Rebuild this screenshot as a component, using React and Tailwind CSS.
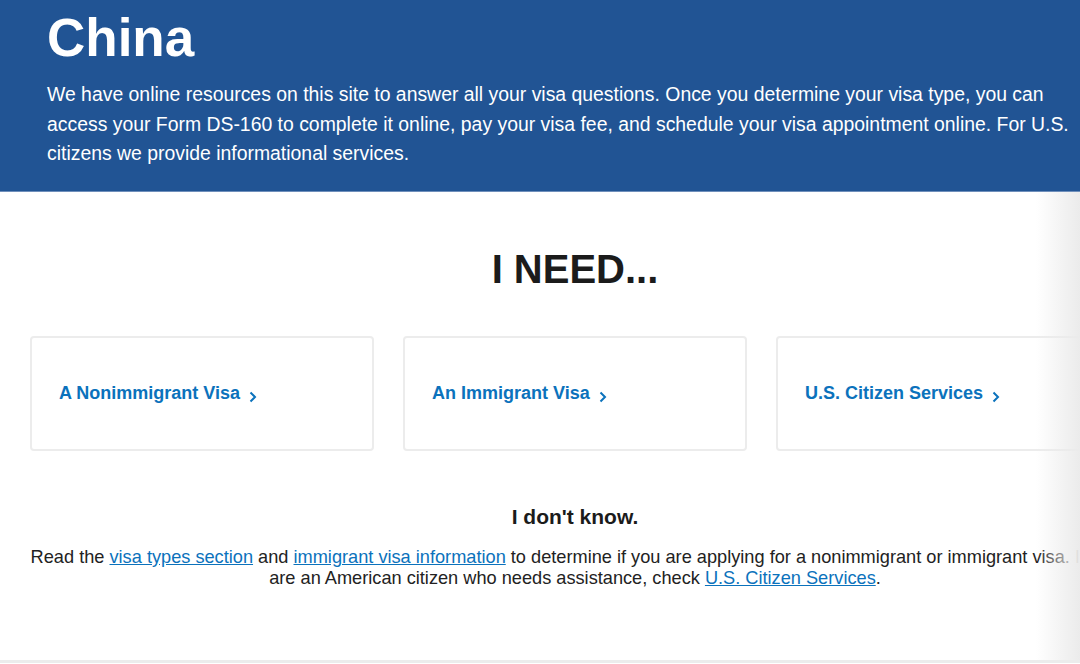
import React from 'react';

const CARDS = ['A Nonimmigrant Visa', 'An Immigrant Visa', 'U.S. Citizen Services'];

function Chevron() {
  return (
    <svg width="8" height="12" viewBox="0 0 8 12" className="shrink-0 mt-[6px]">
      <path d="M1.5 1.5 L6 6 L1.5 10.5" fill="none" stroke="#0b72bc" strokeWidth="2" />
    </svg>
  );
}

export default function App() {
  return (
    <div className="w-full overflow-hidden bg-white text-[#222] font-['Liberation_Sans',Arial,sans-serif]">
      {/* Banner */}
      <header className="bg-[#215494] border-b border-[#6f8fbb] h-[192px] pl-[47px] pt-[8px]">
        <h1 className="text-white font-bold text-[53px] leading-[60px]">China</h1>
        <p className="mt-[12px] w-[1032px] text-white text-[19.4px] leading-[29.5px]">
          We have online resources on this site to answer all your visa questions. Once you determine your visa type, you can access your Form DS-160 to complete it online, pay your visa fee, and schedule your visa appointment online. For U.S. citizens we provide informational services.
        </p>
      </header>

      <div className="relative">
        <main className="w-[1150px] px-[30px] pt-[53px] pb-[71px]">
          <h2 className="text-center font-bold text-[40px] leading-[48px] text-[#1b1b1b]">I NEED...</h2>

          <div className="mt-[43px] grid grid-cols-3 gap-[29px]">
            {CARDS.map(label => (
              <a
                key={label}
                href="#"
                className="h-[115px] border-2 border-[#ececec] rounded-[4px] flex items-center gap-[9px] px-[27px] text-[#0b72bc] font-bold text-[18px]"
              >
                <span>{label}</span>
                <Chevron />
              </a>
            ))}
          </div>

          <h3 className="mt-[54px] text-center font-bold text-[21px] leading-[24px] text-[#1b1b1b]">I don't know.</h3>
          <p className="mt-[18px] text-center text-[18.2px] leading-[21px] text-[#222]">
            Read the <a href="#" className="text-[#0b72bc] underline">visa types section</a> and{' '}
            <a href="#" className="text-[#0b72bc] underline">immigrant visa information</a> to determine if you are applying for a nonimmigrant or immigrant visa. If you are an American citizen who needs assistance, check{' '}
            <a href="#" className="text-[#0b72bc] underline">U.S. Citizen Services</a>.
          </p>
        </main>

        {/* right edge fade */}
        <div className="absolute right-0 top-0 bottom-0 w-[44px] bg-gradient-to-r from-transparent to-[#ebebeb] pointer-events-none" />
      </div>

      <div className="h-[3px] bg-[#ececec]" />
    </div>
  );
}
